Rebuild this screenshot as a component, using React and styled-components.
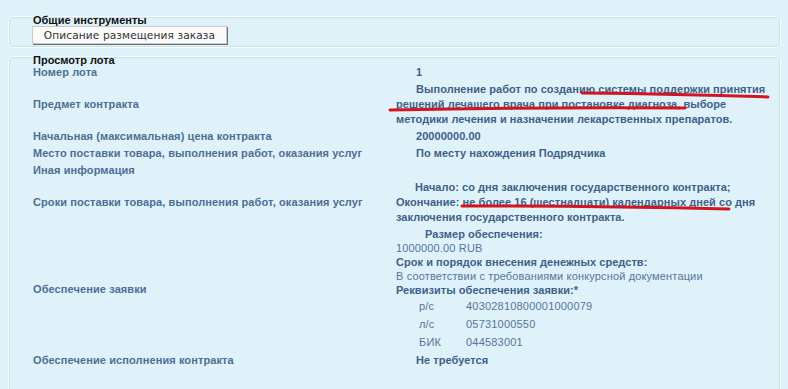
import React from "react";
import styled, { createGlobalStyle } from "styled-components";

const GlobalStyle = createGlobalStyle`
  html, body {
    margin: 0;
    padding: 0;
    background: #dff2f9;
  }
  body {
    font-family: "Liberation Sans", Arial, sans-serif;
    font-size: 11px;
  }
`;

const Page = styled.div`
  position: relative;
  width: 788px;
  height: 389px;
  overflow: hidden;
  padding-top: 16px;
  box-sizing: border-box;
`;

const Group = styled.div`
  margin: 0 7px 8px 8px;
  border: 1px solid #f6fcfe;
  box-shadow: 0 0 0 1px #cfe2ea inset;
  border-radius: 4px;
  padding: 0 0 0 24px;
  min-height: ${(p) => p.$minHeight || 0}px;
`;

const Legend = styled.div`
  margin-top: -3px;
  font-weight: bold;
  font-size: 11px;
  line-height: 13px;
  color: #111;
`;

const Button = styled.button`
  margin: -1px 0 0 -1px;
  width: 195px;
  height: 18px;
  padding: 0;
  background: #fafafa;
  border: 1px solid #c9c9c9;
  box-shadow: 1px 1px 0 #6d6d6d;
  font-family: "DejaVu Sans", Verdana, sans-serif;
  font-size: 10.6px;
  letter-spacing: 0.1px;
  color: #333;
`;

const Rows = styled.div`
  display: grid;
  grid-template-columns: 363px 378px;
  align-items: center;
  row-gap: 2px;
  margin-top: -2px;
`;

const Label = styled.div`
  font-weight: bold;
  color: #4d6e95;
  line-height: 15px;
  letter-spacing: 0.1px;
`;

const Value = styled.div`
  font-weight: bold;
  color: #3e6088;
  line-height: ${(p) => p.$lh || 15}px;
  min-height: 15px;
`;

const Para = styled.div`
  text-indent: ${(p) => p.$indent || 0}px;
  font-weight: ${(p) => (p.$normal ? "normal" : "bold")};
  letter-spacing: ${(p) => (p.$normal ? "0.15px" : "0.05px")};
  color: ${(p) => (p.$normal ? "#56759a" : "#3e6088")};
`;

const Req = styled.div`
  display: grid;
  grid-template-columns: 47px auto;
  padding-left: 23px;
  font-weight: normal;
  color: #56759a;
  line-height: 18px;
  letter-spacing: 0.2px;
`;

const Marks = styled.svg`
  position: absolute;
  left: 0;
  top: 0;
  pointer-events: none;
`;

const rows = [
  { label: "Номер лота", value: [{ t: "1", i: 20 }] },
  {
    label: "Предмет контракта",
    value: [
      {
        t: "Выполнение работ по созданию системы поддержки принятия решений лечащего врача при постановке диагноза, выборе методики лечения и назначении лекарственных препаратов.",
        i: 20,
      },
    ],
  },
  { label: "Начальная (максимальная) цена контракта", value: [{ t: "20000000.00", i: 20 }] },
  {
    label: "Место поставки товара, выполнения работ, оказания услуг",
    value: [{ t: "По месту нахождения Подрядчика", i: 20 }],
  },
  { label: "Иная информация", value: [] },
  {
    label: "Сроки поставки товара, выполнения работ, оказания услуг",
    value: [
      { t: "Начало: со дня заключения государственного контракта;", i: 19 },
      { t: "Окончание: не более 16 (шестнадцати) календарных дней со дня заключения государственного контракта." },
    ],
  },
];

const App = () => {
  return (
    <Page>
      <GlobalStyle />
      <Group $minHeight={30}>
        <Legend>Общие инструменты</Legend>
        <Button>Описание размещения заказа</Button>
      </Group>
      <Group $minHeight={340}>
        <Legend>Просмотр лота</Legend>
        <Rows>
          {rows.map((r, idx) => (
            <React.Fragment key={idx}>
              <Label>{r.label}</Label>
              <Value>
                {r.value.map((v, j) => (
                  <Para key={j} $indent={v.i}>
                    {v.t}
                  </Para>
                ))}
              </Value>
            </React.Fragment>
          ))}
          <Label>Обеспечение заявки</Label>
          <Value $lh={14}>
            <Para $indent={29}>Размер обеспечения:</Para>
            <Para $normal>1000000.00 RUB</Para>
            <Para>Срок и порядок внесения денежных средств:</Para>
            <Para $normal>В соответствии с требованиями конкурсной документации</Para>
            <Para>Реквизиты обеспечения заявки:*</Para>
            <Req>
              <span>р/с</span>
              <span>40302810800001000079</span>
              <span>л/с</span>
              <span>05731000550</span>
              <span>БИК</span>
              <span>044583001</span>
            </Req>
          </Value>
          <Label>Обеспечение исполнения контракта</Label>
          <Value>
            <Para $indent={20}>Не требуется</Para>
          </Value>
        </Rows>
      </Group>
      <Marks width="788" height="389">
        <g fill="none" stroke="#d4141f" strokeWidth="3" strokeLinecap="round">
          <path d="M582 93 Q 680 94 768 97" />
          <path d="M390 110 Q 540 107 685 108" />
          <path d="M462 206 Q 600 206 729 209" />
        </g>
      </Marks>
    </Page>
  );
};

export default App;
